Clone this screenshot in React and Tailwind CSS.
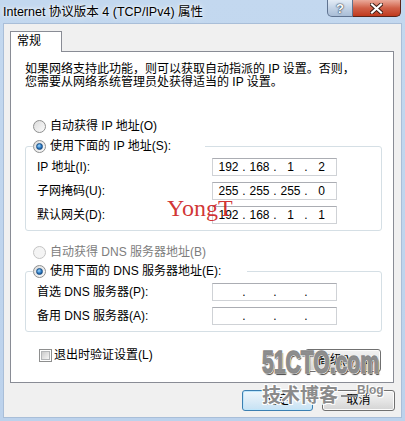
import React from 'react';

const ui = "font-['Liberation_Sans','Noto_Sans_CJK_SC',sans-serif]";

const Radio = ({ checked, disabled }) => (
  <span
    className={`flex h-[13px] w-[13px] shrink-0 items-center justify-center rounded-full border ${
      disabled ? 'border-[#c4c4c4] bg-[#f4f4f4]' : 'border-[#8e8f8f] bg-gradient-to-br from-[#dcdcdc] to-[#fbfbfb]'
    }`}
  >
    {checked && (
      <span className="h-[7px] w-[7px] rounded-full border border-[#1a4f86] bg-[radial-gradient(circle_at_40%_35%,#9fd8ff,#2a78c2_55%,#0c3a6e)]" />
    )}
  </span>
);

const IpBox = ({ parts = ['', '', '', ''] }) => (
  <div className="flex h-[18px] w-[125px] items-center border border-[#cfd2d6] border-t-[#abadb3] bg-white pl-[3px] text-[12px] leading-[16px]">
    {parts.map((p, i) => (
      <React.Fragment key={i}>
        <span className="w-[25px] text-center">{p}</span>
        {i < 3 && <span className="w-[6px] text-center">.</span>}
      </React.Fragment>
    ))}
  </div>
);

const Row = ({ label, parts }) => (
  <div className="flex h-[18px] items-center">
    <span className="w-[186px] pl-[11px] text-[12px] leading-[13px]">{label}</span>
    <IpBox parts={parts} />
  </div>
);

const Group = ({ legend, legendWidth, children }) => (
  <fieldset className="ml-[14px] w-[357px] rounded-[3px] border border-[#d5dfe5]">
    <legend className={`ml-[7px] h-[13px] ${legendWidth}`}>
      <div className="flex h-[13px] items-center gap-[4px] text-[12px] leading-[13px]">
        <Radio checked />
        <span>{legend}</span>
      </div>
    </legend>
    <div className="mt-[5px] flex flex-col gap-[6px] pb-[6px]">{children}</div>
  </fieldset>
);

const WinButton = ({ children, primary, className = '' }) => (
  <div
    className={`flex items-center justify-center rounded-[3px] border text-[12px] leading-[13px] ${
      primary
        ? 'border-[#3c7fb1] bg-gradient-to-b from-[#eef7fd] via-[#dcecf7] to-[#c6e2f4] shadow-[inset_0_0_0_1px_#bfe6fb]'
        : 'border-[#707070] bg-gradient-to-b from-[#f2f2f2] via-[#e6e6e6] to-[#d4d4d4] shadow-[inset_0_0_0_1px_#fcfcfc]'
    } ${className}`}
  >
    {children}
  </div>
);

export default function App() {
  return (
    <div className={`relative h-[421px] w-[405px] overflow-hidden bg-gradient-to-b from-[#c3d8ef] to-[#bcd2ec] text-black ${ui}`}>
      {/* title bar */}
      <div className="flex h-[24px] items-start justify-between">
        <span className="pl-[3px] text-[12.5px] leading-[24px] [text-shadow:0_0_6px_#fff,0_0_3px_#fff]">
          Internet 协议版本 4 (TCP/IPv4) 属性
        </span>
        <div className="mr-[4px] flex">
          <div className="flex h-[17px] w-[26px] items-center justify-center rounded-bl-[5px] border border-t-0 border-[#5f7390] bg-gradient-to-b from-[#e3ecf6] via-[#c3d3e6] to-[#a9bdd6] text-[13px] font-bold leading-[15px] text-white [text-shadow:0_0_2px_#1d2c40,0_0_1px_#1d2c40]">
            ?
          </div>
          <div className="flex h-[17px] w-[48px] items-center justify-center rounded-br-[5px] border border-l-0 border-t-0 border-[#5a2419] bg-gradient-to-b from-[#eaaa9b] via-[#d06048] to-[#c0391c]">
            <svg width="13" height="11" viewBox="0 0 13 11">
              <path d="M2 1.5 L11 9.5 M11 1.5 L2 9.5" stroke="#3b1b14" strokeWidth="4" strokeLinecap="square" />
              <path d="M2 1.5 L11 9.5 M11 1.5 L2 9.5" stroke="#fff" strokeWidth="2.2" strokeLinecap="square" />
            </svg>
          </div>
        </div>
      </div>

      {/* client area */}
      <div className="mx-[4px] flex h-[393px] flex-col bg-[#f0f0f0] shadow-[0_0_0_1px_#a9bed8]">
        <div className="relative z-10 -mb-px ml-[6px] mt-[7px] h-[21px] w-[52px] border border-b-0 border-[#898c95] bg-white pl-[6px] pt-[3px] text-[12px] leading-[13px]">
          常规
        </div>
        <div className="ml-[6px] flex h-[332px] w-[384px] flex-col border border-[#898c95] bg-white">
          <p className="ml-[14px] mt-[11px] text-[12px] leading-[13px]">
            如果网络支持此功能，则可以获取自动指派的 IP 设置。否则，
            <br />
            您需要从网络系统管理员处获得适当的 IP 设置。
          </p>

          <div className="ml-[22px] mt-[31px] flex h-[13px] items-center gap-[4px] text-[12px] leading-[13px]">
            <Radio />
            <span>自动获得 IP 地址(O)</span>
          </div>

          <div className="mt-[7px]">
            <Group legend="使用下面的 IP 地址(S):" legendWidth="w-[172px]">
              <Row label="IP 地址(I):" parts={['192', '168', '1', '2']} />
              <Row label="子网掩码(U):" parts={['255', '255', '255', '0']} />
              <Row label="默认网关(D):" parts={['192', '168', '1', '1']} />
            </Group>
          </div>

          <div className="ml-[22px] mt-[15px] flex h-[13px] items-center gap-[4px] text-[12px] leading-[13px] text-[#7d7d7d]">
            <Radio disabled />
            <span>自动获得 DNS 服务器地址(B)</span>
          </div>

          <div className="mt-[6px]">
            <Group legend="使用下面的 DNS 服务器地址(E):" legendWidth="w-[214px]">
              <Row label="首选 DNS 服务器(P):" />
              <Row label="备用 DNS 服务器(A):" />
            </Group>
          </div>

          <div className="mr-[12px] mt-[17px] flex items-start justify-between">
            <div className="ml-[28px] flex h-[13px] items-center gap-[2px] text-[12px] leading-[13px]">
              <span className="flex h-[13px] w-[13px] items-center justify-center border border-[#8e8f8f] bg-white">
                <span className="h-[9px] w-[9px] border border-[#b4b6b8] bg-gradient-to-br from-[#cbcbcb] to-[#f6f6f6]" />
              </span>
              <span>退出时验证设置(L)</span>
            </div>
            <WinButton className="h-[23px] w-[76px]">高级(V)...</WinButton>
          </div>
        </div>

        <div className="mt-[7px] flex justify-end gap-[9px] pr-[6px]">
          <WinButton primary className="h-[21px] w-[71px]">确定</WinButton>
          <WinButton className="h-[21px] w-[73px]">取消</WinButton>
        </div>
      </div>

      {/* watermarks */}
      <span className="absolute left-[167px] top-[196px] font-['Liberation_Serif',serif] text-[24px] leading-[24px] text-[#cc1a1a]/90">
        YongT
      </span>
      <span className="absolute left-[262px] top-[346px] origin-left scale-x-[0.66] text-[32px] font-bold leading-[32px] text-[#8e8e8e] [-webkit-text-stroke:1.5px_#8a8a8a] [text-shadow:1px_1px_0_#fff,-1px_-1px_0_#fff,1px_-1px_0_#fff,-1px_1px_0_#fff,2px_2px_1px_#4a4a4a]">
        51CTO.com
      </span>
      <span className="absolute left-[262px] top-[384px] font-['Noto_Sans_CJK_SC',sans-serif] text-[19px] font-bold leading-[20px] text-[#8b8b8b] [text-shadow:1px_1px_0_#fff,-1px_-1px_0_#fff,1px_-1px_0_#fff,-1px_1px_0_#fff]">
        技术博客
      </span>
      <span className="absolute left-[341px] top-[395px] h-[2px] w-[16px] bg-[#8b8b8b]" />
      <span className="absolute left-[357px] top-[383px] text-[12px] font-bold leading-[14px] text-[#8b8b8b] [text-shadow:1px_1px_0_#fff,-1px_-1px_0_#fff]">
        Blog
      </span>
    </div>
  );
}
